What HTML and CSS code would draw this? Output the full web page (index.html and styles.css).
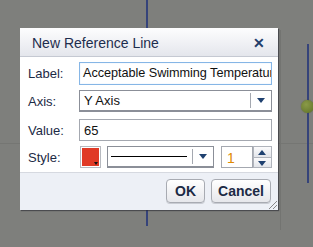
FILE: index.html
```html
<!DOCTYPE html>
<html lang="en">
<head>
    <meta charset="UTF-8">
    <title>New Reference Line</title>
    <link rel="stylesheet" href="styles.css">
</head>
<body>

    <!-- chart behind the dialog -->
    <div class="chart">
        <div class="grid-h"></div>
        <div class="frame-v"></div>
        <div class="ref-line ref-a"></div>
        <div class="ref-line ref-b"></div>
        <div class="marker"></div>
    </div>

    <div class="dialog">
        <div class="dialog-title">
            <span>New Reference Line</span>
            <span class="close">&#x2715;</span>
        </div>

        <div class="dialog-body">
            <div class="row">
                <label>Label:</label>
                <div class="text-input focused">Acceptable Swimming Temperature</div>
            </div>
            <div class="row">
                <label>Axis:</label>
                <div class="select wide">
                    <span class="select-text">Y Axis</span>
                    <span class="select-arrow"></span>
                </div>
            </div>
            <div class="row value-row">
                <label>Value:</label>
                <div class="text-input">65</div>
            </div>
            <div class="row">
                <label>Style:</label>
                <div class="swatch"><span class="swatch-tri"></span></div>
                <div class="select line-select">
                    <span class="line-sample"></span>
                    <span class="select-arrow"></span>
                </div>
                <div class="spinner">
                    <div class="spin-value">1</div>
                    <div class="spin-buttons">
                        <span class="spin-up"></span>
                        <span class="spin-down"></span>
                    </div>
                </div>
            </div>
        </div>

        <div class="dialog-footer">
            <button class="btn ok">OK</button>
            <button class="btn">Cancel</button>
            <span class="grip"></span>
        </div>
    </div>

</body>
</html>
```

FILE: styles.css
```css
body {
    margin: 0;
    width: 313px;
    height: 247px;
    overflow: hidden;
    background-color: #7e7f7c;
    font-family: "Liberation Sans", Arial, sans-serif;
    color: #1c2a45;
}
.chart {
    position: relative;
    width: 313px;
    height: 247px;
}
.grid-h {
    position: absolute;
    left: 0;
    right: 0;
    top: 143px;
    height: 1px;
    background-color: #757673;
}
.frame-v {
    position: absolute;
    left: 280px;
    top: 30px;
    width: 1px;
    height: 200px;
    background-color: #737471;
}
.ref-line {
    position: absolute;
    width: 2px;
    background-color: #35437a;
}
.ref-a {
    left: 146px;
    top: 0;
    height: 226px;
}
.ref-b {
    left: 307px;
    top: 44px;
    height: 139px;
}
.marker {
    position: absolute;
    left: 301px;
    top: 100px;
    width: 13px;
    height: 13px;
    border-radius: 50%;
    background: radial-gradient(circle at 40% 35%, #8a9a48, #5e7025);
    box-shadow: 0 0 1px #4a5520;
}

/* dialog window */
.dialog {
    position: absolute;
    left: 20px;
    top: 28px;
    width: 258px;
    height: 182px;
    background-color: #fff;
    box-shadow: 1px 1px 1px rgba(40, 40, 50, 0.6);
    display: flex;
    flex-direction: column;
}
.dialog-title {
    height: 27px;
    border-bottom: 1px solid #c5c9d2;
    background: linear-gradient(#fdfdfe, #e4e6ec);
    display: flex;
    align-items: center;
    justify-content: space-between;
    padding: 1px 12px 0 12px;
    font-size: 14px;
    color: #1d2d4d;
}
.close {
    font-size: 14px;
    font-weight: bold;
    color: #1f3d6b;
    margin-right: 1px;
}
.dialog-body {
    height: 116px;
    padding: 5px 6px 0 8px;
    box-sizing: border-box;
    display: flex;
    flex-direction: column;
    gap: 5px;
    border-bottom: 1px solid #d6d9e0;
}
.row {
    display: flex;
    align-items: center;
    height: 22px;
    font-size: 13px;
}
.row:first-child {
    height: 23px;
}
.value-row {
    margin-top: 2px;
}
.row label {
    width: 51px;
    flex: none;
}
.text-input {
    flex: 1;
    height: 22px;
    box-sizing: border-box;
    border: 1px solid #a4a8b0;
    padding: 3px 3px 0 4px;
    white-space: nowrap;
    overflow: hidden;
    color: #111;
}
.text-input.focused {
    height: 23px;
    padding-left: 3px;
    font-size: 12.7px;
    letter-spacing: -0.05px;
    border-color: #86b6e6;
    box-shadow: inset 0 0 1px #aecdf0;
}
.select {
    height: 22px;
    box-sizing: border-box;
    border: 1px solid #8b8f98;
    border-bottom-width: 2px;
    display: flex;
    align-items: center;
    background-color: #fff;
}
.wide {
    flex: 1;
}
.select-text {
    flex: 1;
    padding-left: 4px;
    color: #111;
}
.select-arrow {
    width: 20px;
    height: 15px;
    border-left: 1px solid #a4a8b0;
    position: relative;
}
.select-arrow::after {
    content: "";
    position: absolute;
    left: 6px;
    top: 5px;
    border-left: 4px solid transparent;
    border-right: 4px solid transparent;
    border-top: 5px solid #1f4170;
}
.swatch {
    width: 21px;
    height: 22px;
    box-sizing: border-box;
    border: 1px solid #b7bac0;
    padding: 1px;
    background: #fff;
    position: relative;
    margin-left: 1px;
}
.swatch::before {
    content: "";
    display: block;
    width: 100%;
    height: 100%;
    background-color: #e03a26;
}
.swatch-tri {
    position: absolute;
    right: 2px;
    bottom: 2px;
    border-left: 2px solid transparent;
    border-right: 2px solid transparent;
    border-top: 3px solid #111;
}
.line-select {
    width: 107px;
    margin-left: 6px;
}
.line-sample {
    flex: 1;
    height: 1px;
    background-color: #000;
    margin: 0 5px 0 3px;
}
.spinner {
    display: flex;
    margin-left: 7px;
}
.spin-value {
    width: 32px;
    height: 22px;
    box-sizing: border-box;
    border: 1px solid #a4a8b0;
    padding: 3px 5px 0;
    color: #e08a00;
    font-size: 14px;
}
.spin-buttons {
    width: 19px;
    height: 22px;
    display: flex;
    flex-direction: column;
}
.spin-up, .spin-down {
    flex: 1;
    box-sizing: border-box;
    border: 1px solid #b0b4bc;
    background: linear-gradient(#fbfbfc, #e3e5ea);
    position: relative;
}
.spin-up {
    border-bottom: none;
}
.spin-up::after, .spin-down::after {
    content: "";
    position: absolute;
    left: 4px;
    top: 3px;
    border-left: 4px solid transparent;
    border-right: 4px solid transparent;
}
.spin-up::after {
    border-bottom: 5px solid #1f4170;
}
.spin-down::after {
    border-top: 5px solid #1f4170;
}
.dialog-footer {
    flex: 1;
    background-color: #edf0f6;
    display: flex;
    justify-content: flex-end;
    align-items: flex-start;
    gap: 6px;
    padding: 6px 7px 0 0;
    position: relative;
}
.btn {
    height: 24px;
    padding: 0 6px;
    border: 1px solid #a8abb2;
    border-radius: 4px;
    background: linear-gradient(#ffffff, #e6e7eb);
    font-family: "Liberation Sans", Arial, sans-serif;
    font-size: 14px;
    font-weight: bold;
    color: #1c2a45;
    box-shadow: 0 1px 0 #c9ccd3;
}
.ok {
    width: 39px;
}
.grip {
    position: absolute;
    right: 1px;
    bottom: 1px;
    width: 8px;
    height: 8px;
    background: linear-gradient(135deg, transparent 45%, #888 45%, #888 55%, transparent 55%, transparent 70%, #888 70%, #888 80%, transparent 80%);
}
```
